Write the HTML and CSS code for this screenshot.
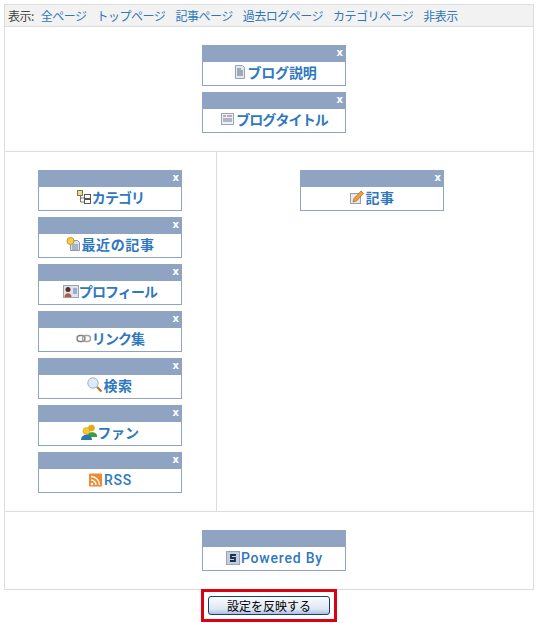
FILE: index.html
```html
<!DOCTYPE html>
<html lang="ja">
<head>
  <meta charset="UTF-8" />
  <title>レイアウト設定</title>
  <link rel="stylesheet" href="styles.css">
</head>
<body>
  <div class="layout-box">
    <div class="toolbar">
      <span class="toolbar-label">表示:</span>
      <a href="#">全ページ</a>
      <a href="#">トップページ</a>
      <a href="#">記事ページ</a>
      <a href="#">過去ログページ</a>
      <a href="#">カテゴリページ</a>
      <a href="#">非表示</a>
    </div>

    <div class="zone zone-wide">
      <div class="widget">
        <div class="widget-head"><span class="close">x</span></div>
        <div class="widget-body">
          <svg class="icon" viewBox="0 0 16 16"><path d="M3.500 1.500h7l2 2v11h-9z" fill="#e4e8f2" stroke="#98a4ba"/><path d="M5 5h4M5 7h6M5 9h6M5 11h6" stroke="#5f6b80"/></svg>ブログ説明
        </div>
      </div>
      <div class="widget">
        <div class="widget-head"><span class="close">x</span></div>
        <div class="widget-body tight">
          <svg class="icon" viewBox="0 0 16 16"><rect x="1.500" y="2.500" width="12" height="11" fill="#eef0f6" stroke="#98a4ba"/><path d="M3 5h3M7 5h5" stroke="#a05a70"/><path d="M3 8h9M3 10h9" stroke="#707c90"/></svg>ブログタイトル
        </div>
      </div>
    </div>

    <div class="columns">
      <div class="zone zone-left">
        <div class="widget">
          <div class="widget-head"><span class="close">x</span></div>
          <div class="widget-body tight">
            <svg class="icon" viewBox="0 0 16 16"><path d="M4.500 6v7h4M4.500 9h4" fill="none" stroke="#777"/><rect x="1.500" y="1.500" width="5" height="5" fill="#e8dc90" stroke="#807850"/><rect x="8.500" y="5.500" width="6" height="4" fill="#fff" stroke="#555"/><rect x="8.500" y="10.500" width="6" height="4" fill="#fff" stroke="#555"/></svg>カテゴリ
          </div>
        </div>
        <div class="widget">
          <div class="widget-head"><span class="close">x</span></div>
          <div class="widget-body kanji">
            <svg class="icon" viewBox="0 0 16 16"><path d="M4.500 4.500h7l2 2v8h-9z" fill="#d8e0f0" stroke="#8a98b4"/><path d="M6 9h6M6 11h6M6 13h6" stroke="#7886a0"/><circle cx="4.500" cy="5" r="3.500" fill="#f6d040" stroke="#c09830"/></svg>最近の記事
          </div>
        </div>
        <div class="widget">
          <div class="widget-head"><span class="close">x</span></div>
          <div class="widget-body tight">
            <svg class="icon" viewBox="0 0 16 16"><rect x="0.500" y="2.500" width="15" height="12" fill="#dde3f0" stroke="#98a4ba"/><circle cx="5" cy="6.500" r="2.500" fill="#5a3020"/><path d="M1.500 14c0-5 7-5 7 0z" fill="#c05a28"/><path d="M10 6h4M10 8h4M10 10h4" stroke="#5878b0"/></svg>プロフィール
          </div>
        </div>
        <div class="widget">
          <div class="widget-head"><span class="close">x</span></div>
          <div class="widget-body tight">
            <svg class="icon" viewBox="0 0 16 16"><rect x="1" y="5.500" width="8" height="6" rx="3" fill="none" stroke="#808080" stroke-width="1.400"/><rect x="6.500" y="5.500" width="8" height="6" rx="3" fill="none" stroke="#a0a0a0" stroke-width="1.400"/></svg>リンク集
          </div>
        </div>
        <div class="widget">
          <div class="widget-head"><span class="close">x</span></div>
          <div class="widget-body kanji">
            <svg class="icon" viewBox="0 0 16 16"><path d="M10 10l4.500 4.500" stroke="#b07838" stroke-width="2.400"/><circle cx="6" cy="6" r="5.200" fill="#d8ecfa" stroke="#a4b4c4"/></svg>検索
          </div>
        </div>
        <div class="widget">
          <div class="widget-head"><span class="close">x</span></div>
          <div class="widget-body">
            <svg class="icon" viewBox="0 0 16 16"><circle cx="10.500" cy="4" r="3.300" fill="#e8a818"/><path d="M6 12c0-5 10-5 10 0v1H7z" fill="#38a038"/><circle cx="5.500" cy="7" r="3.500" fill="#f8c828" stroke="#c89010" stroke-width=".5"/><path d="M0 16c0-7 11-7 11 0z" fill="#2878b8"/></svg>ファン
          </div>
        </div>
        <div class="widget">
          <div class="widget-head"><span class="close">x</span></div>
          <div class="widget-body latin">
            <svg class="icon" viewBox="0 0 16 16"><rect x="1" y="1.500" width="13" height="13" rx="1" fill="#ee8a34"/><circle cx="4" cy="12" r="1.300" fill="#fff"/><path d="M3 8a5 5 0 0 1 5 5M3 4.500a8.500 8.500 0 0 1 8.500 8.500" fill="none" stroke="#fff" stroke-width="1.400"/></svg>RSS
          </div>
        </div>
      </div>
      <div class="zone zone-right">
        <div class="widget">
          <div class="widget-head"><span class="close">x</span></div>
          <div class="widget-body kanji">
            <svg class="icon" viewBox="0 0 16 16"><rect x="1.500" y="4.500" width="10" height="10" fill="#e8e8ee" stroke="#98a0b0"/><path d="M4 13l1-3.500 7-7.500 2.500 2.500-7 7.500z" fill="#f0a030" stroke="#a05820" stroke-width=".6"/></svg>記事
          </div>
        </div>
      </div>
    </div>

    <div class="zone zone-wide zone-bottom">
      <div class="widget">
        <div class="widget-head"></div>
        <div class="widget-body latin">
          <svg class="icon" viewBox="0 0 16 16"><rect x="1.500" y="1.500" width="13" height="13" fill="#c4cce0" stroke="#98a4ba"/><path d="M11 5H6v3h4v3H5" fill="none" stroke="#1c3050" stroke-width="1.800"/></svg>Powered By
        </div>
      </div>
    </div>
  </div>

  <div class="submit-row">
    <div class="highlight">
      <button class="submit" type="button">設定を反映する</button>
    </div>
  </div>
</body>
</html>
```

FILE: styles.css
```css
* {
  box-sizing: border-box;
}

body {
  margin: 0;
  padding: 4px 5px 0 4px;
  background-color: #fff;
  font-family: "Noto Sans CJK JP", "Liberation Sans", sans-serif;
}

.layout-box {
  border: 1px solid #ddd;
}

.toolbar {
  display: flex;
  align-items: center;
  height: 22px;
  padding-left: 3px;
  background-color: #f2f2f2;
  border-bottom: 1px solid #ddd;
  font-size: 12px;
  letter-spacing: -0.5px;
  color: #444;
}

.toolbar-label {
  margin-right: 7px;
}

.toolbar a {
  margin-right: 10px;
  color: #2f78b8;
  text-decoration: none;
}

.zone {
  display: flex;
  flex-direction: column;
  align-items: center;
  gap: 6px;
  padding: 18px 0;
}

.zone-wide {
  padding-left: 10px;
}

.columns {
  display: flex;
  border-top: 1px solid #ddd;
  border-bottom: 1px solid #ddd;
}

.zone-left {
  width: 212px;
  padding-right: 1px;
  border-right: 1px solid #ddd;
}

.zone-right {
  flex: 1;
  padding-right: 6px;
}

.zone-bottom {
  height: 77px;
}

.widget {
  width: 144px;
  height: 41px;
  border: 1px solid #8fa3c3;
  border-top: none;
  background-color: #fff;
}

.widget-head {
  display: flex;
  justify-content: flex-end;
  height: 17px;
  margin: 0 -1px;
  padding-right: 3px;
  background-color: #8fa3c3;
}

.close {
  font-family: "DejaVu Sans", sans-serif;
  font-size: 10px;
  font-weight: bold;
  line-height: 16px;
  color: #fff;
}

.widget-body {
  display: flex;
  justify-content: center;
  align-items: center;
  height: 23px;
  padding-bottom: 4px;
  font-size: 14px;
  font-weight: bold;
  letter-spacing: -0.2px;
  color: #2f78c0;
}

.widget-body.tight {
  letter-spacing: -0.9px;
}

.widget-body.kanji {
  letter-spacing: 0.6px;
}

.widget-body.latin {
  padding-bottom: 2px;
  font-family: Roboto, sans-serif;
  font-size: 14px;
  font-weight: 500;
  letter-spacing: 0.8px;
}

.icon {
  flex: none;
  width: 16px;
  height: 16px;
}

.submit-row {
  display: flex;
  justify-content: center;
}

.highlight {
  display: flex;
  justify-content: center;
  align-items: center;
  width: 136px;
  height: 33px;
  margin-top: -1px;
  border: 3px solid #dc0010;
}

.submit {
  width: 122px;
  height: 19px;
  padding: 0;
  border: 1px solid #1f3f66;
  border-radius: 3px;
  background: linear-gradient(#f8fbff, #dfe8f4 70%, #a9c0de);
  font-family: "Noto Sans CJK JP", sans-serif;
  font-size: 12px;
  line-height: 16px;
  color: #000;
}
```
